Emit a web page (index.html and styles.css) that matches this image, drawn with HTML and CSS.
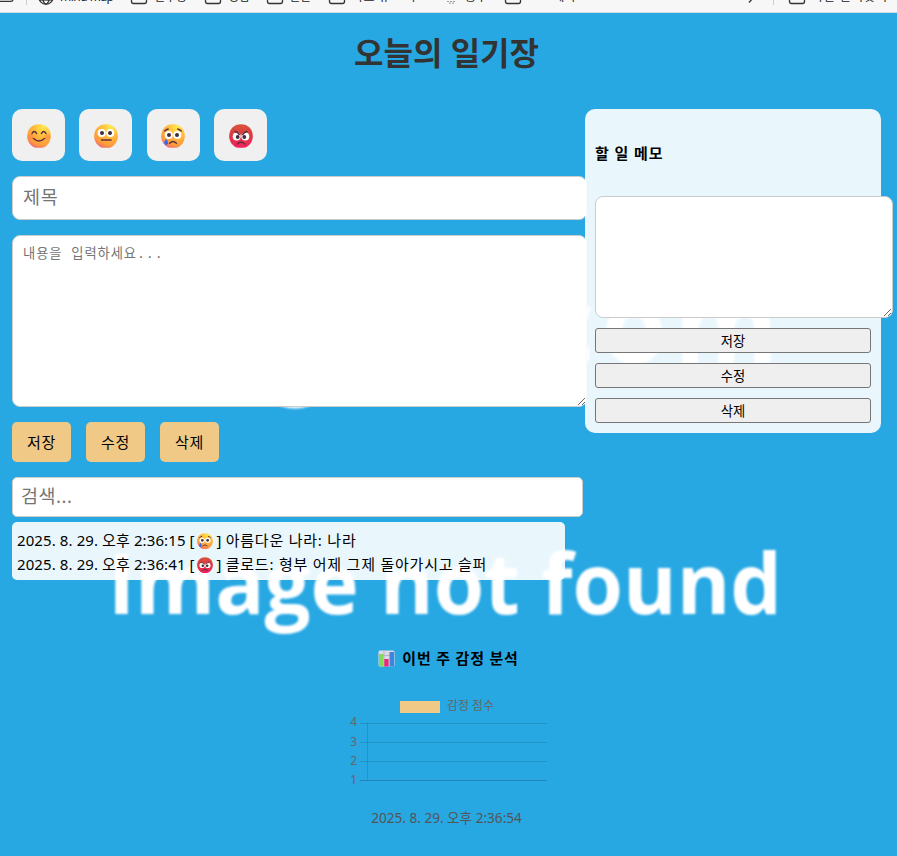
FILE: index.html
```html
<!DOCTYPE html>
<html lang="ko">
<head>
<meta charset="utf-8">
<title>오늘의 일기장</title>
<link rel="stylesheet" href="styles.css">
</head>
<body>
<svg class="defs" width="0" height="0" aria-hidden="true">
  <defs>
    <radialGradient id="yel" cx=".7" cy=".1" r="1"><stop offset="0" stop-color="#ffe94f"/><stop offset=".45" stop-color="#ffb83a"/><stop offset=".8" stop-color="#fd9a3d"/><stop offset="1" stop-color="#ef5c7c"/></radialGradient>
    <linearGradient id="red" x1=".5" y1="0" x2=".5" y2="1"><stop offset="0" stop-color="#d9543c"/><stop offset=".5" stop-color="#dc3742"/><stop offset="1" stop-color="#f51f60"/></linearGradient>
    <path id="face" d="M12 .2C19 .2 23.800 5 23.800 12.200 23.800 17.500 20.500 21.500 16.500 23.500Q12 24.200 7.500 23.500C3.500 21.500.2 17.500.2 12.200.2 5 5 .2 12 .2Z"/>
    <symbol id="smile" viewBox="0 0 24 24"><use href="#face" fill="url(#yel)"/><circle cx="3.500" cy="13" r="2.700" fill="#ff7d4e" opacity=".5"/><circle cx="20.500" cy="13" r="2.700" fill="#ff7d4e" opacity=".5"/><path d="M5 9.500Q7.300 5.500 9.600 9.500M14.400 9.500Q16.700 5.500 19 9.500M6.500 14.500Q12 19.500 17.500 14.500" fill="none" stroke="#5e2f41" stroke-width="1.500" stroke-linecap="round"/></symbol>
    <symbol id="neutral" viewBox="0 0 24 24"><use href="#face" fill="url(#yel)"/><circle cx="7.700" cy="9" r="4" fill="#fff"/><circle cx="16.300" cy="9" r="4" fill="#fff"/><circle cx="8" cy="9" r="2" fill="#432b38"/><circle cx="16" cy="9" r="2" fill="#432b38"/><path d="M7.600 16h9.400" stroke="#5e2f41" stroke-width="1.600" stroke-linecap="round"/></symbol>
    <symbol id="cry" viewBox="0 0 24 24"><use href="#face" fill="url(#yel)"/><circle cx="7.700" cy="11" r="4" fill="#fff"/><circle cx="16.300" cy="11" r="4" fill="#fff"/><circle cx="8" cy="11" r="2" fill="#432b38"/><circle cx="16" cy="11" r="2" fill="#432b38"/><path d="M3.700 7Q5.500 5.400 7.200 5M16.800 5Q18.500 5.400 20.300 7M8.600 19.300Q12 15.700 15.400 19.300" fill="none" stroke="#5e2f41" stroke-width="1.400" stroke-linecap="round"/><path d="M5.200 15.500Q3.700 17.500 3.700 19a1.500 1.500 0 0 0 3 0Q6.700 17.500 5.200 15.500" fill="#3469fa" stroke="#3469fa"/></symbol>
    <symbol id="angry" viewBox="0 0 24 24"><use href="#face" fill="url(#red)"/><circle cx="7.700" cy="12.600" r="4" fill="#fff"/><circle cx="16.300" cy="12.600" r="4" fill="#fff"/><circle cx="8.700" cy="13" r="1.900" fill="#432b38"/><circle cx="15.300" cy="13" r="1.900" fill="#432b38"/><path d="M6 7.500Q9 8.300 10.300 10.500M18 7.500Q15 8.300 13.700 10.500M8.300 20Q12 16.600 15.700 20" fill="none" stroke="#5e2f41" stroke-width="1.500" stroke-linecap="round"/></symbol>
  </defs>
</svg>
<div class="bookmarks">
  <svg width="897" height="13" viewBox="0 0 897 13" aria-hidden="true">
    <g fill="none" stroke="#333" stroke-width="1.300">
      <path d="M0 1.300h11q2 0 2-2"/>
      <circle cx="46" cy="-3" r="7.200"/><ellipse cx="46" cy="-3" rx="3.200" ry="7.200"/><path d="M39 0h14"/>
      <rect x="131.500" y="-11" width="15" height="14.500" rx="2"/><rect x="205.500" y="-11" width="15" height="14.500" rx="2"/><rect x="267.500" y="-11" width="15" height="14.500" rx="2"/><rect x="329.500" y="-11" width="15" height="14.500" rx="2"/><rect x="505.500" y="-11" width="15" height="14.500" rx="2"/><rect x="789.500" y="-11" width="15" height="14.500" rx="2"/>
      <path d="M749 2.500L753-2"/>
    </g>
    <path d="M26.500 0v5M773.500 0v5" stroke="#ccc"/>
    <path d="M447 1.500h9M449 3.200h6" stroke="#999" stroke-dasharray="2 1"/>
    <g class="labels">
      <text x="60" y="1" textLength="54">mind map</text><text x="154" y="1">친구방</text><text x="228" y="1">영감</text><text x="289" y="1">인간</text><text x="352" y="1" textLength="64">자료 뉴스 사</text><text x="465" y="1">공부</text><text x="528" y="1">노트 테이</text><text x="812" y="1" textLength="75">다른 즐겨찾기</text>
    </g>
  </svg>
</div>
<main class="page">
  <svg class="backdrop" width="897" height="843" viewBox="0 13 897 843" aria-hidden="true">
    <g class="backdrop-text">
      <text x="785" y="363" font-size="106" text-anchor="end" letter-spacing="7">imgur.com</text>
      <path d="M268 400Q295 417 322 400Z"/>
      <text x="108" y="614" font-size="84" textLength="674" lengthAdjust="spacingAndGlyphs">Image not found</text>
    </g>
  </svg>
  <h1>오늘의 일기장</h1>
  <div class="columns">
    <section class="diary">
      <div class="moods">
        <button><svg><use href="#smile"/></svg></button>
        <button><svg><use href="#neutral"/></svg></button>
        <button><svg><use href="#cry"/></svg></button>
        <button><svg><use href="#angry"/></svg></button>
      </div>
      <input class="title" placeholder="제목">
      <textarea class="content" placeholder="내용을 입력하세요..."></textarea>
      <div class="actions"><button>저장</button><button>수정</button><button>삭제</button></div>
      <input class="search" placeholder="검색...">
      <div class="entries">
        <div>2025. 8. 29. 오후 2:36:15 [<svg><use href="#cry"/></svg>] <span>아름다운 나라: 나라</span></div>
        <div>2025. 8. 29. 오후 2:36:41 [<svg><use href="#angry"/></svg>] <span>클로드: 형부 어제 그제 돌아가시고 슬퍼</span></div>
      </div>
    </section>
    <aside class="memo">
      <h2>할 일 메모</h2>
      <textarea></textarea>
      <button>저장</button><button>수정</button><button>삭제</button>
    </aside>
  </div>
  <section class="analysis">
    <h3><svg width="17" height="17" viewBox="0 0 17 17"><rect x=".5" y=".5" width="16" height="16" rx="1.500" fill="#ded9e8"/><path d="M0 5.500h17M6 0v17" stroke="#bbb3ca"/><rect x="1" y="4" width="4.500" height="12.500" fill="#83d95a"/><rect x="6.300" y="9" width="4.300" height="7.500" fill="#e52878"/><rect x="11.500" y="2" width="4.500" height="14.500" fill="#3e86dc"/></svg>이번 주 감정 분석</h3>
    <svg class="chart" width="200" height="100" viewBox="0 0 200 100">
      <rect x="51" y="11" width="40" height="12" fill="#f0c987"/>
      <text x="98" y="19.500" textLength="47">감정 점수</text>
      <path d="M11 33.500h187M11 52.500h187M11 71.500h187M18.500 33v57" stroke="#000" stroke-opacity=".12"/>
      <path d="M11 90.500h187" stroke="#000" stroke-opacity=".2"/>
      <g text-anchor="end"><text x="8" y="36">4</text><text x="8" y="56">3</text><text x="8" y="75">2</text><text x="8" y="94">1</text></g>
    </svg>
  </section>
  <footer>2025. 8. 29. 오후 2:36:54</footer>
</main>
</body>
</html>
```
FILE: styles.css
```css
* { box-sizing: border-box; }
body { margin: 0; height: 856px; overflow: hidden; background: #27a8e3; font-family: "Noto Sans", "Noto Sans CJK KR", sans-serif; font-size: 15px; color: #000; }
button, input, textarea { font-family: inherit; margin: 0; }
.defs { position: absolute; }
.bookmarks { height: 13px; background: #f7f7f7; border-bottom: 1px solid #d5dce0; overflow: hidden; }
.bookmarks svg { display: block; }
.labels { font-size: 12px; fill: #222; }
.page { position: relative; z-index: 0; height: 843px; }
.backdrop { position: absolute; inset: 0; z-index: -1; }
.backdrop-text { font-family: "Open Sans", sans-serif; font-weight: 700; fill: #fff; filter: blur(1.2px); }
h1 { margin: 0; padding-top: 16px; height: 96px; line-height: 48px; font-size: 32px; text-align: center; color: #333; padding-right: 4px; }
.columns { display: flex; align-items: flex-start; padding-left: 12px; height: 489px; }
.diary { width: 573px; flex: none; }
.moods { display: flex; gap: 14.400px; }
.moods button { width: 53px; height: 52px; padding: 2px 0 0; border: 0; border-radius: 10px; background: #f0f0f0; display: flex; align-items: center; justify-content: center; }
.moods svg { width: 24px; height: 24px; }
.title { display: block; width: 575px; height: 44px; margin-top: 15px; padding: 0 10px 3px; font-size: 18.500px; letter-spacing: .8px; border: 1px solid #ccc; border-radius: 8px; }
.content { display: block; width: 575px; height: 172px; margin-top: 15px; padding: 7px 10px; border: 1px solid #ccc; border-radius: 8px; font-size: 13.300px; letter-spacing: .9px; font-family: "Liberation Mono", "Noto Sans CJK KR", monospace; }
::placeholder { color: #757575; }
.actions { display: flex; gap: 15px; margin-top: 15px; }
.actions button { width: 59px; height: 40px; padding: 0 0 1px; border: 0; border-radius: 5px; background: #f0c987; font-size: 15px; letter-spacing: .6px; }
.search { display: block; width: 571px; height: 40px; margin-top: 15px; padding: 0 8px 3px; border: 1px solid #ccc; border-radius: 5px; font-size: 18.500px; letter-spacing: .5px; }
.entries { width: 553px; height: 58px; margin-top: 5px; padding: 6px 5px 4px; border-radius: 5px; background: rgba(255,255,255,.9); line-height: 24px; white-space: nowrap; letter-spacing: .1px; }
.entries div { height: 24px; }
.entries span { letter-spacing: .78px; }
.entries svg { width: 16px; height: 16px; margin: 0 4px 0 2px; vertical-align: -3px; }
.memo { position: relative; width: 296px; height: 324px; padding: 10px; border-radius: 10px; background: rgba(255,255,255,.9); display: flex; flex-direction: column; gap: 10px; }
.memo h2 { margin: 0; height: 67px; padding-top: 23px; line-height: 22px; font-size: 15px; letter-spacing: .9px; }
.memo textarea { width: 298px; height: 122px; flex: none; border: 1px solid #ccc; border-radius: 8px; }
.memo button { height: 25px; flex: none; padding: 0; border: 1px solid #767676; border-radius: 3px; background: #efefef; font-size: 13.300px; }
.analysis { display: flex; flex-direction: column; align-items: center; padding-top: 49px; }
h3 { display: flex; align-items: center; gap: 7px; margin: 0; height: 22px; font-size: 15px; line-height: 22px; letter-spacing: .8px; }
.chart { margin: 21px 0 0 1px; font-size: 12px; fill: #666; }
footer { margin-top: 18px; padding-right: 4px; line-height: 20px; text-align: center; font-size: 13.600px; color: #555; }
```
